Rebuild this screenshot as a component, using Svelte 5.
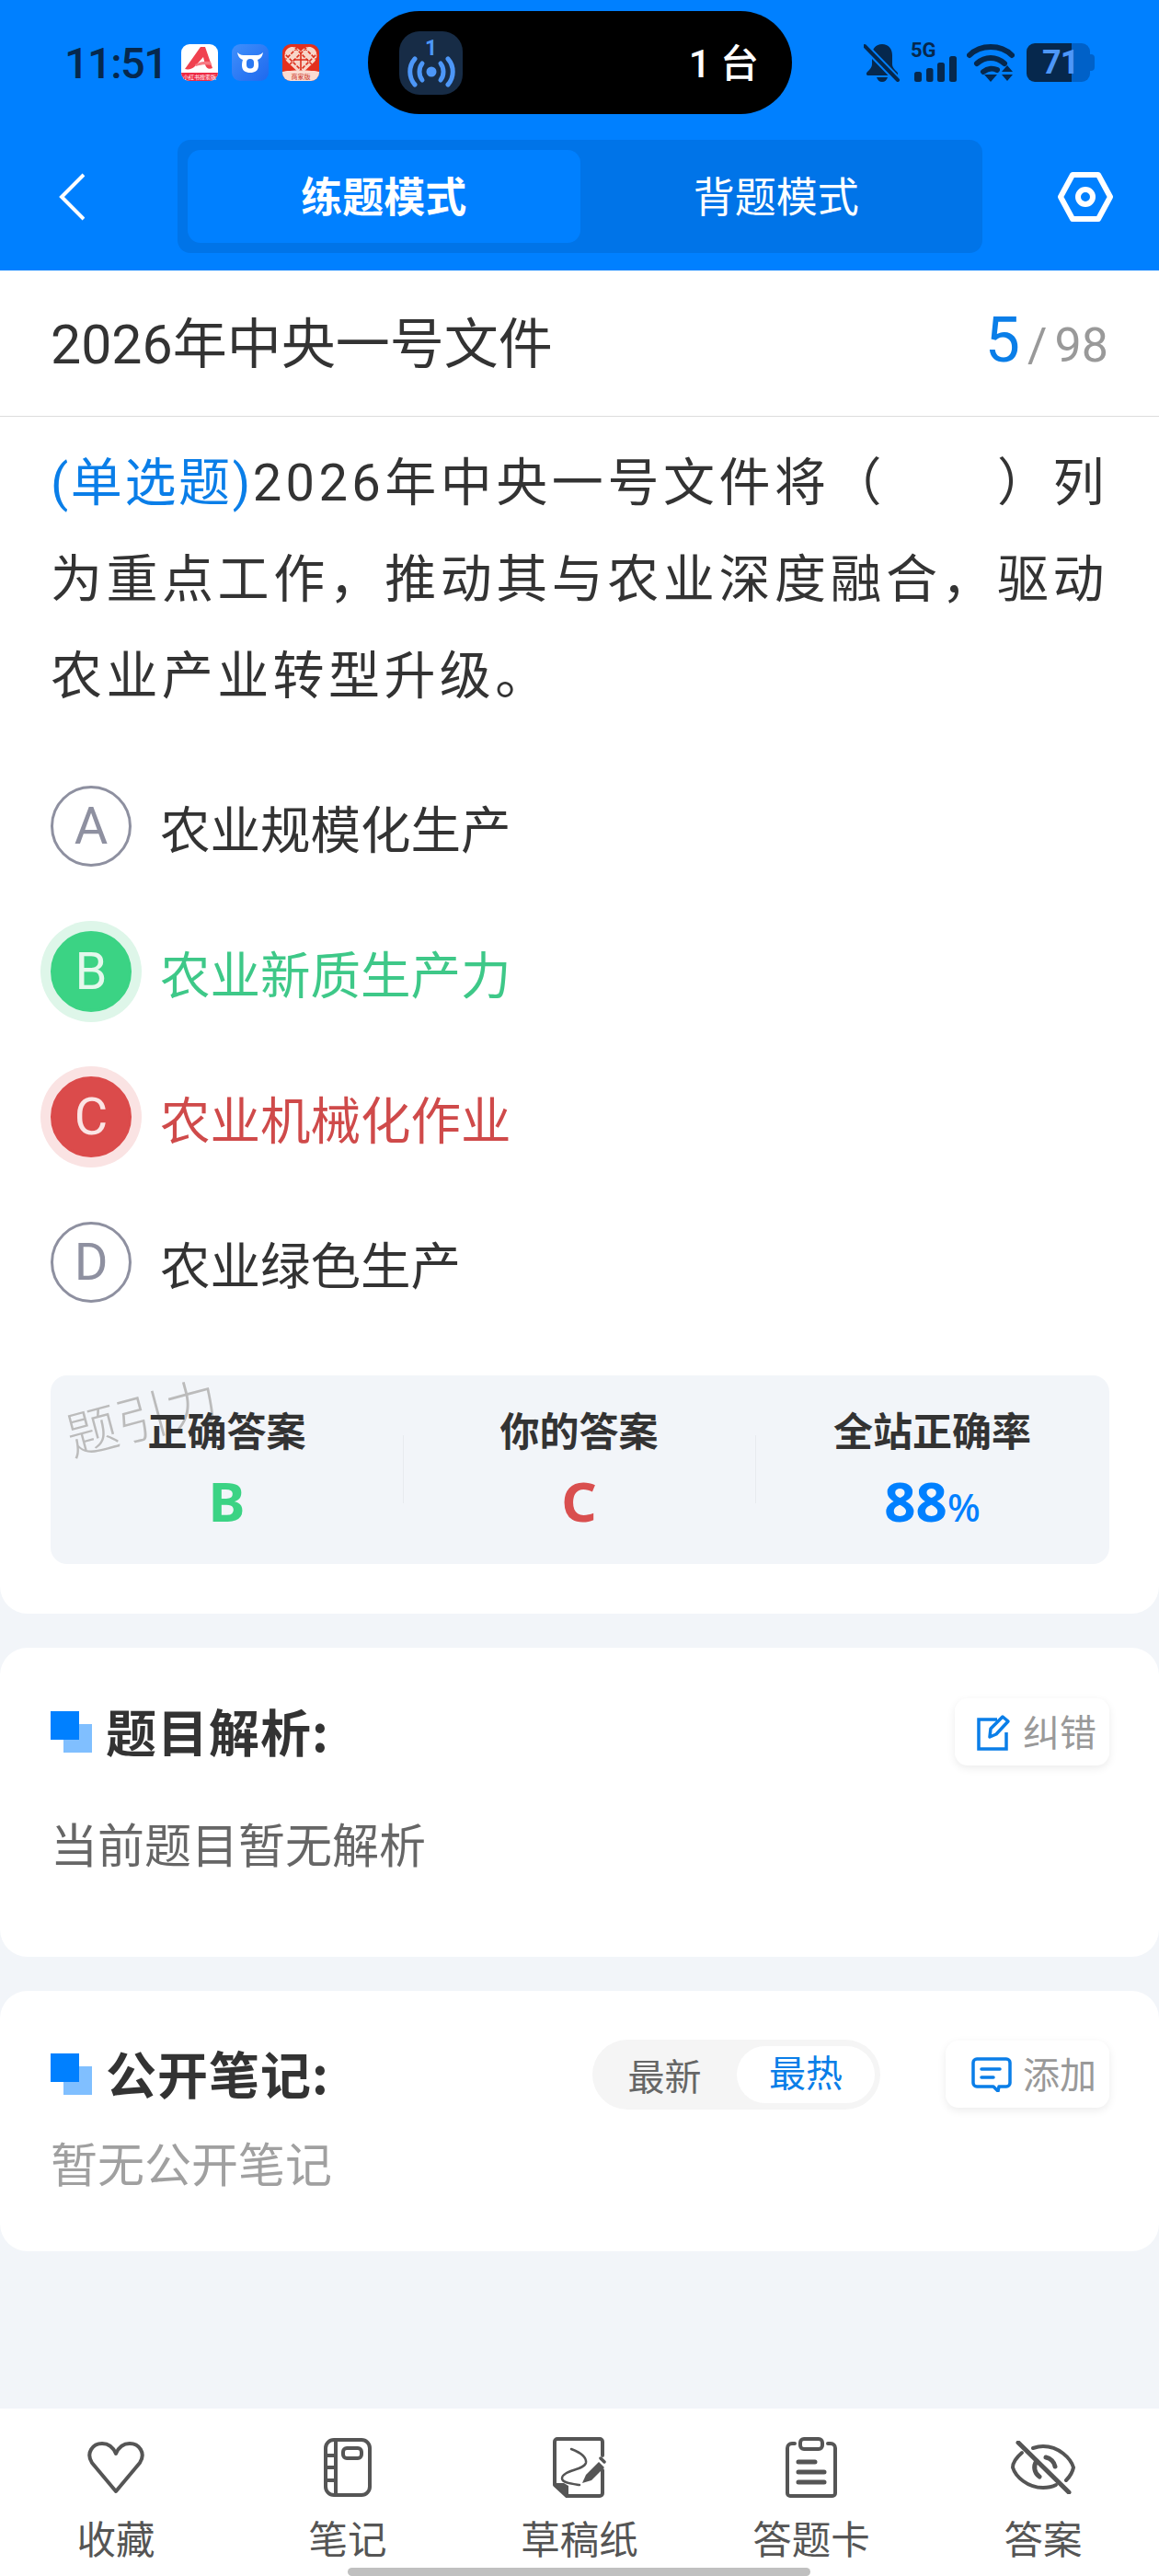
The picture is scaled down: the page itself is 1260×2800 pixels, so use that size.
<script>
	const tabs = [
		{ label: '收藏', icon: 'heart' },
		{ label: '笔记', icon: 'note' },
		{ label: '草稿纸', icon: 'draft' },
		{ label: '答题卡', icon: 'card' },
		{ label: '答案', icon: 'eye' }
	];
	const options = [
		{ key: 'A', text: '农业规模化生产', state: '' },
		{ key: 'B', text: '农业新质生产力', state: 'right' },
		{ key: 'C', text: '农业机械化作业', state: 'wrong' },
		{ key: 'D', text: '农业绿色生产', state: '' }
	];
</script>

<div class="phone">
	<header class="top">
		<div class="status">
			<div class="status-left">
				<span class="time">11:51</span>
				<svg class="app" viewBox="0 0 40 40">
					<rect width="40" height="40" rx="9" fill="#fff" />
					<path d="M0 31H40V31a9 9 0 0 1-9 9H9a9 9 0 0 1-9-9Z" fill="#ee2b45" />
					<path d="M4 27 21 3h5l8 23c-4 2-7 0-8-4l-2-8-9 10c-3 3-7 4-11 3Z" fill="#f0414f" />
					<path d="M15 22c5-3 11-4 17-3l1 4c-5-1-11-1-17 1Z" fill="#f77a84" />
					<text x="20" y="37.6" font-size="6" fill="#fff" text-anchor="middle">小红书搜索版</text>
				</svg>
				<svg class="app" viewBox="0 0 40 40">
					<defs>
						<linearGradient id="bull" x1="0" y1="0" x2="1" y2="1">
							<stop offset="0" stop-color="#3f8ffb" />
							<stop offset="1" stop-color="#1e69ee" />
						</linearGradient>
					</defs>
					<rect width="40" height="40" rx="9" fill="url(#bull)" />
					<path d="M6 9c1 5 3 7 6 8-1 3-1 5-1 6 0 6 4 8 9 8s9-2 9-8c0-1 0-3-1-6 3-1 5-3 6-8-3 3-6 3-9 3H15c-3 0-6 0-9-3Z" fill="#fff" />
					<rect x="16" y="16" width="8" height="10.5" rx="4" fill="#2a78f2" />
				</svg>
				<svg class="app" viewBox="0 0 40 40">
					<defs>
						<clipPath id="heart-clip">
							<path d="M20 33 5 19C0 13 3 3 11 3c4 0 7 2 9 5 2-3 5-5 9-5 8 0 11 10 6 16Z" />
						</clipPath>
					</defs>
					<rect width="40" height="40" rx="9" fill="#e3301d" />
					<path d="M20 33 5 19C0 13 3 3 11 3c4 0 7 2 9 5 2-3 5-5 9-5 8 0 11 10 6 16Z" fill="#f8d5c8" />
					<g clip-path="url(#heart-clip)" fill="none" stroke="#dc2f1c" stroke-width="1.6">
						<path d="M0 8 30 38M0 18 20 38M10 0 40 30M20 0 40 20M40 8 10 38M40 18 20 38M30 0 0 30M20 0 0 20" stroke-dasharray="4 1.5" />
						<path d="M20 10v18M12 17h16" />
					</g>
					<path d="M0 30C7 28 33 28 40 30V31a9 9 0 0 1-9 9H9a9 9 0 0 1-9-9Z" fill="#fbdcd2" />
					<text x="20" y="38" font-size="7" fill="#c9301e" text-anchor="middle">商家版</text>
				</svg>
			</div>
			<div class="island">
				<div class="island-icon">
					<span class="island-num">1</span>
					<svg viewBox="0 0 52 34" width="52" height="34">
						<circle cx="26" cy="17" r="5.5" fill="#4d97f8" />
						<g fill="none" stroke="#4d97f8" stroke-width="5" stroke-linecap="round">
							<path d="M16 8c-4 5-4 13 0 18M36 8c4 5 4 13 0 18" />
							<path d="M8 3c-7 8-7 20 0 28M44 3c7 8 7 20 0 28" />
						</g>
					</svg>
				</div>
				<span class="island-text">1 台</span>
			</div>
			<div class="status-right">
				<svg class="bell" viewBox="0 0 40 42" width="40" height="42">
					<path d="M20 1c-7 0-11 5-11 12v10c0 3-2 5-5 8-2 2-1 4 1 4h30c2 0 3-2 1-4-3-3-5-5-5-8V13C31 6 27 1 20 1Z" fill="#06284d" />
					<path d="M14 37h12c-1 3-3 5-6 5s-5-2-6-5Z" fill="#06284d" />
					<path d="M1 3 37 40" stroke="#0080ff" stroke-width="8" />
					<path d="M1 3 37 40" stroke="#06284d" stroke-width="4" stroke-linecap="round" />
				</svg>
				<div class="signal">
					<span class="net">5G</span>
					<svg viewBox="0 0 46 28" width="46" height="28">
						<g fill="#06284d">
							<rect x="0" y="17" width="8" height="11" rx="2.5" />
							<rect x="13" y="13" width="7.5" height="15" rx="2.5" />
							<rect x="25" y="7" width="8" height="21" rx="2.5" />
							<rect x="38" y="0" width="8" height="28" rx="2.5" />
						</g>
					</svg>
				</div>
				<svg viewBox="0 0 52 42" width="52" height="42">
					<g fill="none" stroke="#06284d" stroke-width="6" stroke-linecap="round">
						<path d="M3 13C15 1 37 1 49 13" />
						<path d="M11 22c9-8 21-8 30 0" />
						<path d="M18 31c5-4 11-4 15-2" />
					</g>
					<path d="M19 34h14l-7 8Z" fill="#06284d" />
					<path d="M44 24l6 7H38ZM38 34h12l-6 7Z" fill="#06284d" />
				</svg>
				<div class="battery">
					<span class="batt-fill">71</span>
					<span class="batt-cap"></span>
				</div>
			</div>
		</div>
		<nav class="nav">
			<svg class="back" viewBox="0 0 28 52" width="28" height="52">
				<path d="M27 2 3 26l24 24" fill="none" stroke="#fff" stroke-width="4" />
			</svg>
			<div class="mode">
				<button class="mode-tab active">练题模式</button>
				<button class="mode-tab">背题模式</button>
			</div>
			<svg class="hex" viewBox="0 0 60 54" width="60" height="54">
				<path d="M16 3h28l13 24-13 24H16L3 27Z" fill="none" stroke="#fff" stroke-width="6" stroke-linejoin="round" />
				<circle cx="30" cy="27" r="8" fill="none" stroke="#fff" stroke-width="6" />
			</svg>
		</nav>
	</header>

	<main class="content">
		<section class="card question">
			<div class="title-row">
				<h1>2026年中央一号文件</h1>
				<div class="count"><b>5</b><i>/</i><span>98</span></div>
			</div>
			<p class="stem"><span class="kind">(单选题)</span>2026年中央一号文件将（　　）列为重点工作，推动其与农业深度融合，驱动农业产业转型升级。</p>
			<ul class="options">
				{#each options as o}
					<li class={o.state}>
						<span class="badge">{o.key}</span>
						<span class="opt-text">{o.text}</span>
					</li>
				{/each}
			</ul>
			<div class="stats">
				<span class="watermark">题引力</span>
				<div class="stat"><strong>正确答案</strong><em class="green">B</em></div>
				<div class="stat"><strong>你的答案</strong><em class="red">C</em></div>
				<div class="stat"><strong>全站正确率</strong><em class="blue">88<small>%</small></em></div>
			</div>
		</section>

		<section class="card analysis">
			<div class="head">
				<span class="mark"></span>
				<h2>题目解析:</h2>
				<button class="small-btn fix">
					<svg viewBox="0 0 38 40" width="38" height="40" fill="none" stroke="#0a7ee8" stroke-width="3.5">
						<path d="M22 6H2v32h30V20" />
						<path d="M14 25 15 16 28 3l6 5-13 14Z" stroke-linejoin="round" />
					</svg>
					<span>纠错</span>
				</button>
			</div>
			<p class="empty dark">当前题目暂无解析</p>
		</section>

		<section class="card notes">
			<div class="head">
				<span class="mark"></span>
				<h2>公开笔记:</h2>
				<div class="sort">
					<span>最新</span>
					<span class="on">最热</span>
				</div>
				<button class="small-btn add">
					<svg viewBox="0 0 44 38" width="44" height="38" fill="none" stroke="#0a7ee8" stroke-width="3.5" stroke-linecap="round">
						<path d="M6 2h32a4 4 0 0 1 4 4v22a4 4 0 0 1-4 4h-8l-1 5-5-5H6a4 4 0 0 1-4-4V6a4 4 0 0 1 4-4Z" stroke-linejoin="round" />
						<path d="M11 13h20M11 22h13" />
					</svg>
					<span>添加</span>
				</button>
			</div>
			<p class="empty">暂无公开笔记</p>
		</section>
	</main>

	<footer class="tabbar">
		{#each tabs as t}
			<div class="tab">
				<div class="tab-icon">
					{#if t.icon === 'heart'}
						<svg viewBox="0 0 64 58" width="64" height="58" fill="none" stroke="#555" stroke-width="4" stroke-linejoin="round">
							<path d="M32 55 6 24C-1 13 7 3 17 3c7 0 12 4 15 11 3-7 8-11 15-11 10 0 18 10 11 21Z" />
						</svg>
					{:else if t.icon === 'note'}
						<svg viewBox="0 0 52 64" width="52" height="64" fill="none" stroke="#555" stroke-width="4">
							<rect x="2" y="2" width="48" height="60" rx="9" />
							<path d="M13 2v60M2 19h11M2 32h11M2 46h11" />
							<rect x="21" y="11" width="20" height="11" rx="4" />
						</svg>
					{:else if t.icon === 'draft'}
						<svg viewBox="0 0 58 66" width="58" height="66" fill="none" stroke="#555" stroke-width="4" stroke-linejoin="round" stroke-linecap="round">
							<path d="M54 20V5a3 3 0 0 0-3-3H5a3 3 0 0 0-3 3v47l13 12h36a3 3 0 0 0 3-3V36" />
							<path d="M2 50h10l5 3v11Z" fill="#555" stroke="none" />
							<path d="M20 13c8 3 17 8 16 15-2 8-26 8-26 17 0 5 12 6 19 7" stroke-width="2.5" />
							<path d="M32 50l4-9 14-14 6 6-14 14Z" fill="#555" stroke="none" />
							<path d="M52 23l4 4" stroke-width="3.5" />
						</svg>
					{:else if t.icon === 'card'}
						<svg viewBox="0 0 56 66" width="56" height="66" fill="none" stroke="#555" stroke-width="4" stroke-linecap="round">
							<path d="M10 7H7a5 5 0 0 0-5 5v49a3 3 0 0 0 3 3h46a3 3 0 0 0 3-3V12a5 5 0 0 0-5-5h-3" />
							<rect x="16" y="2" width="24" height="11" rx="4" />
							<path d="M14 27h18M14 38h28M14 49h28" stroke-width="5" />
						</svg>
					{:else}
						<svg viewBox="0 0 70 58" width="70" height="58" fill="none" stroke="#555" stroke-width="4" stroke-linecap="round">
							<path d="M12 13C5 19 2 25 2 29c3 10 16 22 33 22 5 0 10-1 14-3" />
							<path d="M24 8c3-1 7-2 11-2 17 0 30 13 33 23-1 5-4 10-8 14" />
							<path d="M8 2 63 56" stroke-width="5" />
							<path d="M28 22a12 12 0 0 0 3 17" stroke-width="5" />
							<path d="M38 18c5 1 9 5 10 10" stroke-width="5" />
						</svg>
					{/if}
				</div>
				<span>{t.label}</span>
			</div>
		{/each}
		<span class="home-bar"></span>
	</footer>
</div>

<style>
	:global(body) {
		margin: 0;
		background: #f2f5f9;
	}

	.phone {
		position: relative;
		width: 1260px;
		height: 2800px;
		display: flex;
		flex-direction: column;
		overflow: hidden;
		background: #f2f5f9;
		font-family: Roboto, 'Noto Sans CJK SC', sans-serif;
		color: #333;
	}

	.top {
		height: 294px;
		flex: none;
		background: #0080ff;
	}

	.status {
		height: 152px;
		box-sizing: border-box;
		padding-top: 12px;
		display: grid;
		grid-template-columns: 400px 461px 1fr;
	}

	.status-left {
		display: flex;
		align-items: center;
		height: 112px;
		padding-left: 70px;
		box-sizing: border-box;
	}

	.time {
		width: 127px;
		font-size: 47px;
		font-weight: 500;
		letter-spacing: -1.6px;
		color: #06284d;
	}

	.app {
		width: 40px;
		height: 40px;
		margin-right: 15px;
	}

	.island {
		height: 112px;
		background: #000;
		border-radius: 56px;
		display: flex;
		align-items: center;
		justify-content: space-between;
		padding: 0 36px 0 34px;
		box-sizing: border-box;
	}

	.island-icon {
		width: 69px;
		height: 69px;
		box-sizing: border-box;
		padding-top: 8px;
		border-radius: 22px;
		background: #172c46;
		display: flex;
		flex-direction: column;
		align-items: center;
		color: #4d97f8;
	}

	.island-num {
		font-size: 23px;
		line-height: 22px;
		height: 19px;
		font-weight: 700;
	}

	.island-text {
		font-size: 42px;
		color: #fff;
		font-weight: 500;
		padding-bottom: 5px;
	}

	.status-right {
		height: 112px;
		display: flex;
		align-items: center;
		padding-left: 78px;
		gap: 11px;
	}

	.signal {
		position: relative;
		width: 50px;
		height: 42px;
		display: flex;
		align-items: flex-end;
		justify-content: flex-end;
	}

	.net {
		position: absolute;
		left: 0;
		top: -2px;
		font-size: 22px;
		line-height: 20px;
		font-weight: 700;
		color: #06284d;
	}

	.battery {
		display: flex;
		align-items: center;
		margin-left: 2px;
	}

	.batt-fill {
		width: 69px;
		height: 42px;
		box-sizing: border-box;
		padding-left: 17px;
		border-radius: 9px;
		font-size: 36px;
		line-height: 42px;
		font-weight: 700;
		letter-spacing: -1px;
		color: #4d97f8;
		background: linear-gradient(to right, #06284d 71%, #0061c8 71%);
	}

	.batt-cap {
		width: 5px;
		height: 18px;
		background: #0061c8;
		border-radius: 0 4px 4px 0;
	}

	.nav {
		height: 123px;
		display: flex;
		align-items: center;
	}

	.back {
		margin-left: 64px;
		width: 28px;
		flex: none;
	}

	.mode {
		margin-left: 101px;
		width: 875px;
		height: 123px;
		box-sizing: border-box;
		padding: 11px;
		background: #0074e8;
		border-radius: 14px;
		display: flex;
		flex: none;
	}

	.mode-tab {
		flex: 1;
		border: none;
		padding: 0 0 5px;
		border-radius: 14px;
		background: transparent;
		color: #fff;
		font: inherit;
		font-size: 45px;
	}

	.mode-tab.active {
		background: #0080ff;
		font-weight: 700;
	}

	.hex {
		margin-left: 82px;
		flex: none;
	}

	.content {
		flex: 1;
		display: flex;
		flex-direction: column;
		gap: 37px;
	}

	.card {
		background: #fff;
		border-radius: 30px;
	}

	.question {
		border-radius: 0 0 30px 30px;
		height: 1460px;
	}

	.title-row {
		height: 159px;
		box-sizing: border-box;
		padding: 0 55px 7px;
		border-bottom: 1px solid #dcdcdc;
		display: flex;
		align-items: center;
		justify-content: space-between;
	}

	h1 {
		margin: 0;
		font-size: 59px;
		font-weight: 400;
		color: #333;
	}

	.count {
		display: flex;
		align-items: baseline;
		color: #999;
		font-size: 52px;
	}

	.count b {
		font-size: 68px;
		font-weight: 400;
		color: #0a7ee8;
	}

	.count i {
		font-style: normal;
		margin: 0 8px;
	}

	.stem {
		margin: 20px 0 0;
		padding: 0 55px;
		font-size: 56px;
		line-height: 105px;
		letter-spacing: 4.4px;
		text-align: justify;
		color: #333;
	}

	.kind {
		color: #0a7ee8;
		letter-spacing: 2.5px;
	}

	.options {
		list-style: none;
		margin: 31px 0 0;
		padding: 0;
	}

	.options li {
		height: 158px;
		padding-left: 55px;
		display: flex;
		align-items: center;
	}

	.badge {
		width: 88px;
		height: 88px;
		box-sizing: border-box;
		border-radius: 50%;
		border: 3px solid #8e90a0;
		display: flex;
		align-items: center;
		justify-content: center;
		font-size: 56px;
		font-weight: 400;
		color: #8e90a0;
		flex: none;
	}

	.opt-text {
		margin-left: 31px;
		font-size: 54.5px;
	}

	li.right .badge {
		background: #3bd384;
		border-color: #3bd384;
		color: #e4f8ec;
		box-shadow: 0 0 0 11px #def6e9;
	}

	li.right .opt-text {
		color: #3ec888;
	}

	li.wrong .badge {
		background: #db4b4b;
		border-color: #db4b4b;
		color: #fbe5e5;
		box-shadow: 0 0 0 11px #fae3e3;
	}

	li.wrong .opt-text {
		color: #cf4a4a;
	}

	.stats {
		position: relative;
		margin: 44px 54px 0 55px;
		height: 205px;
		border-radius: 18px;
		background: #f2f5f9;
		display: grid;
		grid-template-columns: 383px 383px 385px;
	}

	.watermark {
		position: absolute;
		left: 16px;
		top: 20px;
		transform: rotate(-15deg);
		font-size: 56px;
		font-weight: 300;
		color: #bbb;
		line-height: 1;
	}

	.stat {
		position: relative;
		display: flex;
		flex-direction: column;
		align-items: center;
		padding-top: 32px;
	}

	.stat + .stat::before {
		content: '';
		position: absolute;
		left: 0;
		top: 65px;
		height: 74px;
		width: 1px;
		background: #e8ebef;
	}

	.stat strong {
		position: relative;
		font-size: 43px;
		line-height: 60px;
		font-weight: 700;
		color: #333;
	}

	.stat em {
		font-family: 'Noto Sans', Roboto, sans-serif;
		font-style: normal;
		font-weight: 700;
		font-size: 60px;
		line-height: 74px;
		margin-top: 7px;
	}

	.stat small {
		font-size: 42px;
		font-weight: 500;
	}

	.green { color: #3bd384; }
	.red { color: #d94f4f; }
	.blue { color: #0080ff; }

	.analysis {
		height: 336px;
		box-sizing: border-box;
		padding: 55px 54px 0 55px;
	}

	.notes {
		height: 283px;
		box-sizing: border-box;
		padding: 54px 54px 0 55px;
	}

	.head {
		display: flex;
		align-items: center;
		height: 73px;
	}

	.mark {
		width: 45px;
		height: 45px;
		flex: none;
		background:
			linear-gradient(#0080ff, #0080ff) 0 0 / 31px 31px no-repeat,
			linear-gradient(#80bfff, #80bfff) 14px 14px / 31px 31px no-repeat;
	}

	h2 {
		margin: 0 auto 0 15px;
		padding-bottom: 5px;
		font-family: 'Noto Sans CJK SC', sans-serif;
		font-size: 55px;
		font-weight: 700;
		letter-spacing: 1px;
		color: #333;
	}

	.small-btn {
		height: 73px;
		padding: 0 14px 0 22px;
		border: none;
		border-radius: 14px;
		background: #fff;
		box-shadow: 0 3px 10px rgba(0, 0, 0, 0.08);
		display: flex;
		align-items: center;
		gap: 12px;
		font: inherit;
		font-size: 40px;
		color: #999;
	}

	.small-btn.fix {
		padding-left: 24px;
	}

	.small-btn.add {
		padding-left: 28px;
	}

	.small-btn span {
		padding-bottom: 4px;
	}

	.sort {
		width: 313px;
		height: 76px;
		box-sizing: border-box;
		padding: 7px 6px 7px 0;
		margin-right: 71px;
		border-radius: 38px;
		background: #f5f5f5;
		display: grid;
		grid-template-columns: 157px 150px;
		align-items: center;
		justify-items: center;
		font-size: 40px;
		color: #666;
	}

	.sort .on {
		width: 100%;
		height: 62px;
		line-height: 62px;
		text-align: center;
		background: #fff;
		border-radius: 31px;
		color: #0a7ee8;
	}

	.empty {
		margin: 0;
		font-size: 51px;
		color: #a0a0a0;
		padding-top: 22px;
	}

	.empty.dark {
		color: #666;
		padding-top: 47px;
	}

	.tabbar {
		position: relative;
		height: 182px;
		flex: none;
		background: #fff;
		display: grid;
		grid-template-columns: repeat(5, 252px);
	}

	.tab {
		display: flex;
		flex-direction: column;
		align-items: center;
		font-size: 42.5px;
		color: #555;
	}

	.tab-icon {
		height: 68px;
		margin-top: 30px;
		margin-bottom: 11px;
		display: flex;
		align-items: center;
	}

	.home-bar {
		position: absolute;
		left: 378px;
		bottom: 0;
		width: 503px;
		height: 9px;
		border-radius: 5px;
		background: #c0c0c0;
	}
</style>
